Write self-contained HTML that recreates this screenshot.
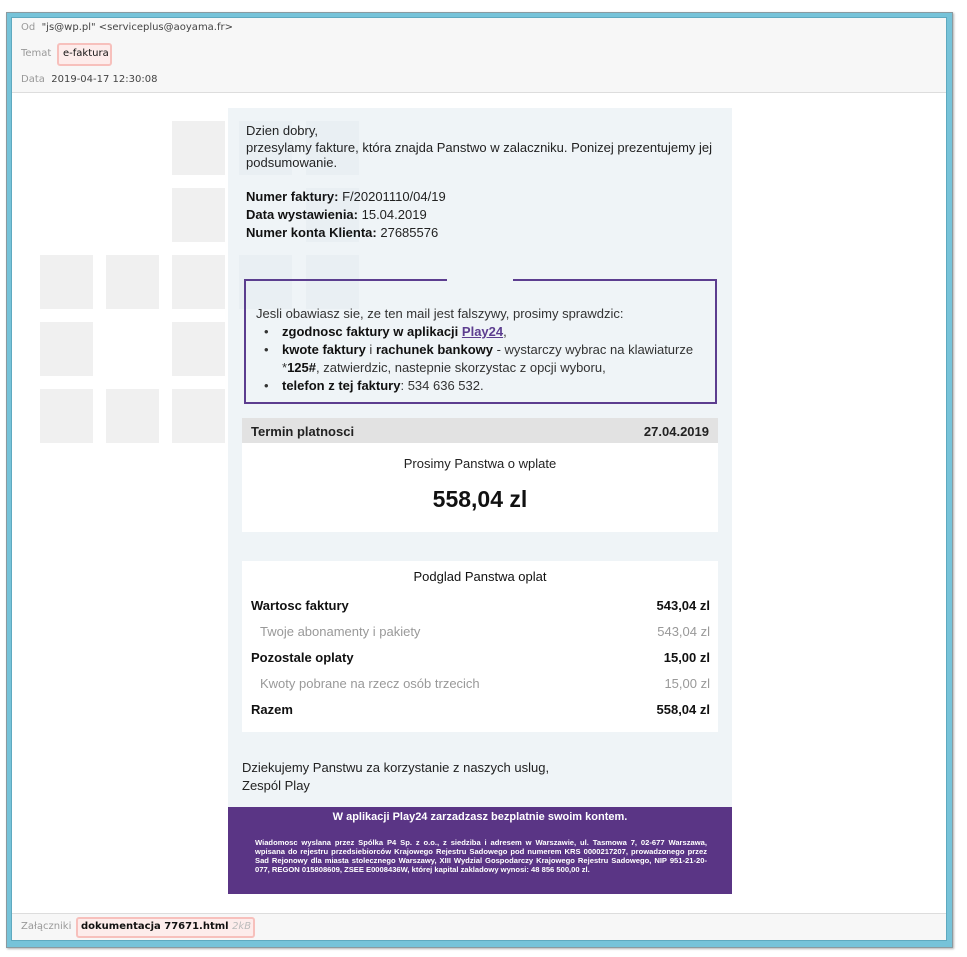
<!DOCTYPE html>
<html><head><meta charset="utf-8"><style>
*{margin:0;padding:0;box-sizing:border-box}
body{width:967px;height:957px;background:#fff;position:relative;overflow:hidden;font-family:"Liberation Sans",Arial,sans-serif;color:#222}
.a{position:absolute;white-space:nowrap}
.frame{position:absolute;left:6px;top:12px;width:947px;height:936px;border:1px solid #8a9aa0;background:#76c3d9;box-shadow:1px 1px 2px rgba(0,0,0,.3)}
.inner{position:absolute;left:11px;top:17px;width:936px;height:924px;background:#fff;border:1px solid #5fa9bf}
.hdr{position:absolute;left:12px;top:18px;width:934px;height:75px;background:#f7f7f7;border-bottom:1px solid #ddd}
.ftr{position:absolute;left:12px;top:913px;width:934px;height:27px;background:#f7f7f7;border-top:1px solid #ddd}
.m{font-family:"DejaVu Sans",Verdana,sans-serif;font-size:10px;color:#444}
.lbl{color:#999}
.tag{position:absolute;background:#fdeceb;border:2px solid #f7c0bc;border-radius:3px}
.sq{position:absolute;width:53px;height:54px;background:rgba(0,0,0,.058);z-index:5}
.sq.i{background:rgba(80,110,140,.035)}
.cb{position:absolute;left:228px;top:108px;width:504px;height:786px;background:#eff4f7}
.t{font-family:"Liberation Sans",Arial,sans-serif;font-size:13px;color:#222}
b{font-weight:bold;color:#111}
</style></head><body>
<div class="frame"></div><div class="inner"></div>
<div class="hdr"></div>
<div class="a m" style="left:21px;top:22px"><span class="lbl">Od</span>&nbsp; "js@wp.pl" &lt;serviceplus@aoyama.fr&gt;</div>
<div class="a m lbl" style="left:21px;top:48px">Temat</div>
<div class="tag" style="left:57px;top:43px;width:55px;height:23px"></div>
<div class="a m" style="left:63px;top:48px;color:#111">e-faktura</div>
<div class="a m" style="left:21px;top:74px"><span class="lbl">Data</span>&nbsp; 2019-04-17 12:30:08</div>

<div class="cb"></div>
<div class="a t" style="left:246px;top:123px">Dzien dobry,</div>
<div class="a t" style="left:246px;top:140px;line-height:15px">przesylamy fakture, która znajda Panstwo w zalaczniku. Ponizej prezentujemy jej<br>podsumowanie.</div>
<div class="a t" style="left:246px;top:188px;line-height:18px"><b>Numer faktury:</b> F/20201110/04/19<br><b>Data wystawienia:</b> 15.04.2019<br><b>Numer konta Klienta:</b> 27685576</div>

<div style="position:absolute;left:244px;top:279px;width:473px;height:125px;border:2px solid #5c3d8f"></div>
<div style="position:absolute;left:447px;top:278px;width:66px;height:4px;background:#eff4f7"></div>
<div class="a t" style="left:256px;top:305px;line-height:18px;color:#333">Jesli obawiasz sie, ze ten mail jest falszywy, prosimy sprawdzic:</div>
<div class="a t" style="left:264px;top:323px;line-height:18px;color:#333">•<br>•<br><br>•</div>
<div class="a t" style="left:282px;top:323px;line-height:18px;color:#333"><b>zgodnosc faktury w aplikacji</b> <a style="color:#5c3d8f;font-weight:bold;text-decoration:underline">Play24</a>,<br><b>kwote faktury</b> i <b>rachunek bankowy</b> - wystarczy wybrac na klawiaturze<br>*<b>125#</b>, zatwierdzic, nastepnie skorzystac z opcji wyboru,<br><b>telefon z tej faktury</b>: 534 636 532.</div>

<div style="position:absolute;left:242px;top:418px;width:476px;height:25px;background:#e2e2e2"></div>
<div style="position:absolute;left:242px;top:443px;width:476px;height:89px;background:#fff"></div>
<div class="a t" style="left:251px;top:424px;font-weight:bold;color:#222">Termin platnosci</div>
<div class="a t" style="right:258px;top:424px;font-weight:bold;color:#222">27.04.2019</div>
<div class="a t" style="left:242px;width:476px;text-align:center;top:456px">Prosimy Panstwa o wplate</div>
<div class="a" style="left:242px;width:476px;text-align:center;top:486px;font-size:23px;font-weight:bold;color:#111">558,04 zl</div>

<div style="position:absolute;left:242px;top:561px;width:476px;height:171px;background:#fff"></div>
<div class="a t" style="left:242px;width:476px;text-align:center;top:569px;color:#111">Podglad Panstwa oplat</div>
<div class="a t" style="left:251px;top:598px"><b>Wartosc faktury</b></div><div class="a t" style="right:257px;top:598px"><b>543,04 zl</b></div>
<div class="a t" style="left:260px;top:624px;color:#999">Twoje abonamenty i pakiety</div><div class="a t" style="right:257px;top:624px;color:#999">543,04 zl</div>
<div class="a t" style="left:251px;top:650px"><b>Pozostale oplaty</b></div><div class="a t" style="right:257px;top:650px"><b>15,00 zl</b></div>
<div class="a t" style="left:260px;top:676px;color:#999">Kwoty pobrane na rzecz osób trzecich</div><div class="a t" style="right:257px;top:676px;color:#999">15,00 zl</div>
<div class="a t" style="left:251px;top:702px"><b>Razem</b></div><div class="a t" style="right:257px;top:702px"><b>558,04 zl</b></div>

<div class="a t" style="left:242px;top:759px;line-height:18px">Dziekujemy Panstwu za korzystanie z naszych uslug,<br>Zespól Play</div>

<div style="position:absolute;left:228px;top:807px;width:504px;height:87px;background:#5a3585"></div>
<div class="a" style="left:228px;width:504px;text-align:center;top:811px;font-size:11px;font-weight:bold;color:#fff">W aplikacji Play24 zarzadzasz bezplatnie swoim kontem.</div>
<div style="position:absolute;left:255px;top:838px;width:452px;font-size:7.6px;line-height:9px;font-weight:bold;color:#fff;text-align:justify">Wiadomosc wyslana przez Spólka P4 Sp. z o.o., z siedziba i adresem w Warszawie, ul. Tasmowa 7, 02-677 Warszawa, wpisana do rejestru przedsiebiorców Krajowego Rejestru Sadowego pod numerem KRS 0000217207, prowadzonego przez Sad Rejonowy dla miasta stolecznego Warszawy, XIII Wydzial Gospodarczy Krajowego Rejestru Sadowego, NIP 951-21-20-077, REGON 015808609, ZSEE E0008436W, której kapital zakladowy wynosi: 48 856 500,00 zl.</div>

<div class="sq" style="left:172px;top:121px"></div><div class="sq i" style="left:239px;top:121px"></div><div class="sq i" style="left:306px;top:121px"></div>
<div class="sq" style="left:172px;top:188px"></div><div class="sq i" style="left:306px;top:188px"></div>
<div class="sq" style="left:40px;top:255px"></div><div class="sq" style="left:106px;top:255px"></div><div class="sq" style="left:172px;top:255px"></div><div class="sq i" style="left:239px;top:255px"></div><div class="sq i" style="left:306px;top:255px"></div>
<div class="sq" style="left:40px;top:322px"></div><div class="sq" style="left:172px;top:322px"></div>
<div class="sq" style="left:40px;top:389px"></div><div class="sq" style="left:106px;top:389px"></div><div class="sq" style="left:172px;top:389px"></div>

<div class="ftr"></div>
<div class="a m lbl" style="left:21px;top:921px">Załączniki</div>
<div class="tag" style="left:76px;top:917px;width:179px;height:21px"></div>
<div class="a m" style="left:81px;top:921px;color:#111;font-weight:bold">dokumentacja 77671.html <span style="color:#bbb;font-weight:normal;font-style:italic">2kB</span></div>
</body></html>
